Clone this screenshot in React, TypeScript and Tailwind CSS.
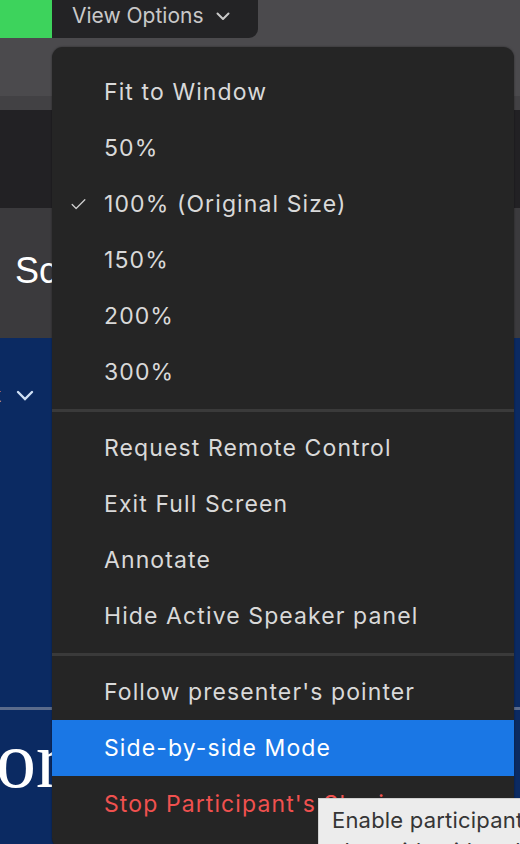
import { Check } from 'lucide-react'

const groups = [
  ['Fit to Window', '50%', '100% (Original Size)', '150%', '200%', '300%'],
  ['Request Remote Control', 'Exit Full Screen', 'Annotate', 'Hide Active Speaker panel'],
  ["Follow presenter's pointer", 'Side-by-side Mode', "Stop Participant's Sharing"],
]

const MenuItem = ({ label }: { label: string }) => {
  const checked = label === '100% (Original Size)'
  const active = label === 'Side-by-side Mode'
  const danger = label.startsWith('Stop')
  return (
    <div
      className={`h-[56px] flex items-center pl-[17px] text-[23px] tracking-[1.1px] ${
        active ? 'bg-[#1a77e5] text-white' : danger ? 'text-[#f0514f]' : 'text-[#d9d9d9]'
      }`}
    >
      <span className="w-[35px] flex items-center">
        {checked && <Check size={19} strokeWidth={1.6} className="text-[#d0d0d0]" />}
      </span>
      <span className="whitespace-nowrap">{label}</span>
    </div>
  )
}

const App = () => {
  return (
    <div className="relative w-[520px] h-[844px] overflow-hidden bg-[#0b2a62] font-['Inter','Noto_Sans',sans-serif]">
      {/* shared screen behind the menu */}
      <div className="h-[96px] bg-[#4b4a4d]">
        <div className="flex h-[38px]">
          <div className="w-[52px] bg-[#3dd35c]" />
          <div className="w-[206px] bg-[#232325] rounded-br-[9px] flex items-center pl-[20px] gap-[12px] text-[#c9c9c9] text-[21px]">
            <span className="-mt-[6px]">View Options</span>
            <svg width="14" height="9" viewBox="0 0 14 9" className="-mt-[6px]">
              <path d="M1.5 1.5l5.5 5.5 5.5-5.5" fill="none" stroke="#c9c9c9" strokeWidth="2" strokeLinecap="round" strokeLinejoin="round" />
            </svg>
          </div>
        </div>
      </div>
      <div className="h-[14px] bg-[#424144]" />
      <div className="h-[98px] bg-[#222124]" />
      <div className="h-[130px] bg-[#3b3a3d] flex items-center pl-[15px]">
        <span className="text-white text-[36px] font-['Liberation_Sans',sans-serif] -mt-[5px]">Screen</span>
      </div>
      <div className="flex flex-col">
        <div className="h-[110px] flex items-start pt-[44px]">
          <span className="text-white text-[24px] leading-none -ml-[6px] font-['Liberation_Serif',serif]">t</span>
          <svg width="18" height="11" viewBox="0 0 18 11" className="ml-[15px] mt-[8px]">
            <path d="M2 2l7 7 7-7" fill="none" stroke="#cfe0f5" strokeWidth="2.4" strokeLinecap="round" />
          </svg>
        </div>
        <div className="h-[139px] flex flex-col items-end pt-[139px]">
          <div className="w-[10px] h-[63px] bg-[#e2e2e2]" />
        </div>
        <div className="h-[120px]" />
        <div className="h-[3px] bg-[#5b6b8b]" />
        <div className="pt-[10px] -ml-[4px] text-white text-[80px] leading-none font-['Liberation_Serif',serif]">or</div>
      </div>

      {/* dropdown menu */}
      <div className="absolute left-[52px] top-[47px] w-[462px] h-[802px] bg-[#252525] rounded-[11px] pt-[17px] shadow-[0_0_2px_rgba(0,0,0,0.5)]">
        {groups.map((items, i) => (
          <div key={i}>
            {i > 0 && (
              <div className="h-[20px] flex items-center">
                <div className="w-full h-[3px] bg-[#3a3a3a]" />
              </div>
            )}
            {items.map((label) => (
              <MenuItem key={label} label={label} />
            ))}
          </div>
        ))}
      </div>

      {/* tooltip */}
      <div className="absolute left-[318px] top-[798px] w-[230px] h-[60px] bg-[#ececec] border border-[#d0d0d0] pl-[13px] pt-[6px] text-[#353535] text-[22px] tracking-[0.2px] leading-[31px] whitespace-nowrap">
        <div>Enable participant's</div>
        <div>alongside either the</div>
      </div>
    </div>
  )
}

export default App
